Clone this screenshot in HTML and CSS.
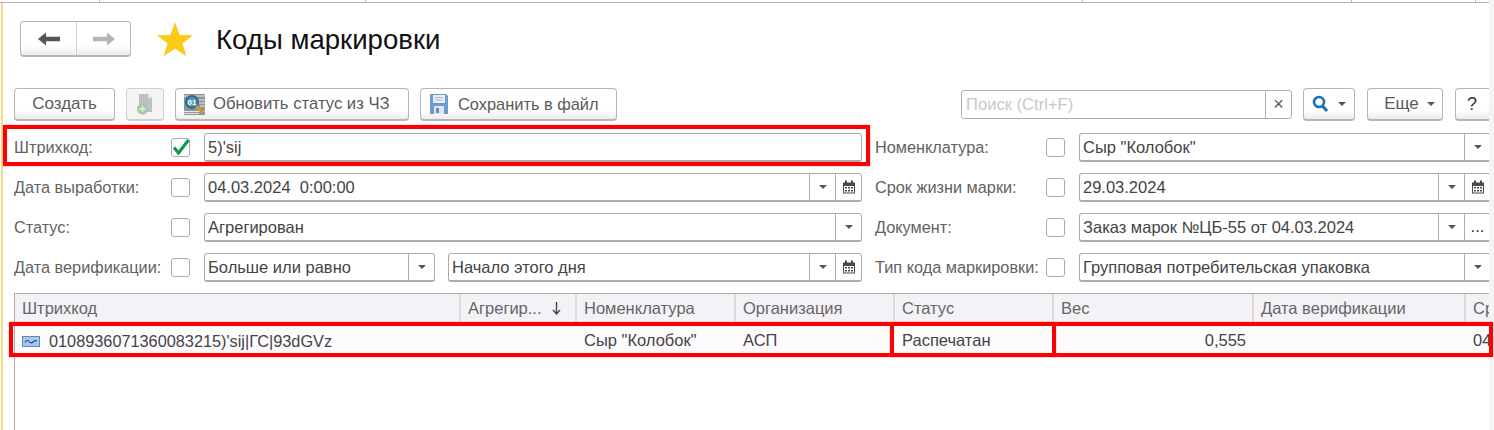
FILE: index.html
```html
<!DOCTYPE html>
<html lang="ru">
<head>
<meta charset="utf-8">
<title>Коды маркировки</title>
<link rel="stylesheet" href="styles.css">
</head>
<body>
<div class="shell">
<div class="tabs"><i class="t1"></i><i class="t2"></i><i class="t3"></i><i class="t4"></i><i class="t5"></i></div>
<main class="page">
  <header class="head">
    <div class="nav">
      <span class="nav-btn"><svg width="22" height="14" viewBox="0 0 22 14"><path d="M0 7 8 .5v4.200h14v4.600H8v4.200z" fill="#555"/></svg></span>
      <span class="nav-btn"><svg width="22" height="14" viewBox="0 0 22 14"><path d="M22 7 14 .5v4.200H0v4.600h14v4.200z" fill="#b4b4b4"/></svg></span>
    </div>
    <svg class="star" width="36" height="33" viewBox="0 0 36 34"><path d="M18 0 22.500 12.500 36 12.800 25.300 20.800 29.200 33.600 18 26 6.800 33.600 10.700 20.800 0 12.800 13.500 12.500z" fill="#fdcb13" stroke="#eeb911" stroke-width=".5"/></svg>
    <h1 class="title">Коды маркировки</h1>
  </header>

  <div class="toolbar">
    <button class="btn b-create">Создать</button>
    <button class="btn b-copy"><svg width="18" height="24" viewBox="0 0 18 24"><path d="M3 2h9l4 4v14H3z" fill="#bcc0c3"/><path d="M12 2v4h4z" fill="#e3e5e7"/><circle cx="6.500" cy="17" r="5.500" fill="#a5c9a8"/><path d="M6.500 14v6M3.500 17h6" stroke="#e8f2e8" stroke-width="1.400"/></svg></button>
    <button class="btn b-update"><svg width="21" height="21" viewBox="0 0 21 21"><rect width="21" height="21" fill="#8f9498"/><path d="M0 2h21M14 6h7M15 9h6M0 17.500h21M16 12h5M0 19.500h15" stroke="#e6e6e6" stroke-width="1"/><circle cx="8" cy="8" r="7" fill="#1f6c90"/><circle cx="8" cy="8" r="5" fill="#5b93ad"/><text x="3.500" y="11" class="qr">01</text><path d="M12 12l7 7" stroke="#d9951e" stroke-width="3"/></svg><span>Обновить статус из ЧЗ</span></button>
    <button class="btn b-save"><svg width="18" height="20" viewBox="0 0 18 20"><path d="M0 0h16l2 2v18H0z" fill="#6c9bd2"/><rect x="3" y="1" width="12" height="8" fill="#e9eff7"/><path d="M5 3.500h8M5 6h8" stroke="#9db6d4"/><rect x="4" y="12" width="10" height="8" fill="#dfe5ec"/><rect x="6" y="14" width="3" height="5" fill="#6c8fb8"/></svg><span>Сохранить в файл</span></button>
    <div class="search">
      <span class="search-input">Поиск (Ctrl+F)</span>
      <span class="search-clear">×</span>
    </div>
    <button class="btn b-find"><svg width="17" height="18" viewBox="0 0 17 18"><circle cx="7" cy="7" r="5" fill="none" stroke="#1f6fb5" stroke-width="2.600"/><path d="M10.500 11l4.500 5" stroke="#1f6fb5" stroke-width="3.200"/></svg><i class="arrow"></i></button>
    <button class="btn b-more"><span>Еще</span><i class="arrow"></i></button>
    <button class="btn b-help">?</button>
  </div>

  <section class="form">
    <div class="row">
      <label class="label">Штрихкод:</label>
      <span class="check"><svg width="19" height="19" viewBox="0 0 19 19"><path d="M3 9.500 7.500 15 17.500 2" fill="none" stroke="#0d9a4a" stroke-width="3.200"/></svg></span>
      <div class="field"><span class="value">5)'sij</span></div>
    </div>
    <div class="row">
      <label class="label">Номенклатура:</label>
      <span class="check"></span>
      <div class="field"><span class="value">Сыр "Колобок"</span><span class="fb"><i class="arrow"></i></span></div>
    </div>
    <div class="row">
      <label class="label">Дата выработки:</label>
      <span class="check"></span>
      <div class="field"><span class="value">04.03.2024&nbsp; 0:00:00</span><span class="fb"><i class="arrow"></i></span><span class="fb"><svg class="cal" width="14" height="14" viewBox="0 0 14 14"><use href="#cal"/></svg></span></div>
    </div>
    <div class="row">
      <label class="label">Срок жизни марки:</label>
      <span class="check"></span>
      <div class="field"><span class="value">29.03.2024</span><span class="fb"><i class="arrow"></i></span><span class="fb"><svg class="cal" width="14" height="14" viewBox="0 0 14 14"><use href="#cal"/></svg></span></div>
    </div>
    <div class="row">
      <label class="label">Статус:</label>
      <span class="check"></span>
      <div class="field"><span class="value">Агрегирован</span><span class="fb"><i class="arrow"></i></span></div>
    </div>
    <div class="row">
      <label class="label">Документ:</label>
      <span class="check"></span>
      <div class="field"><span class="value">Заказ марок №ЦБ-55 от 04.03.2024</span><span class="fb"><i class="arrow"></i></span><span class="fb dots">...</span></div>
    </div>
    <div class="row">
      <label class="label">Дата верификации:</label>
      <span class="check"></span>
      <div class="field f-cond"><span class="value">Больше или равно</span><span class="fb"><i class="arrow"></i></span></div>
      <div class="field f-period"><span class="value">Начало этого дня</span><span class="fb"><i class="arrow"></i></span><span class="fb"><svg class="cal" width="14" height="14" viewBox="0 0 14 14"><use href="#cal"/></svg></span></div>
    </div>
    <div class="row">
      <label class="label">Тип кода маркировки:</label>
      <span class="check"></span>
      <div class="field"><span class="value">Групповая потребительская упаковка</span><span class="fb"><i class="arrow"></i></span></div>
    </div>
  </section>

  <section class="table">
    <div class="thead">
      <span class="th">Штрихкод</span>
      <span class="th th-sort">Агрегир...<svg width="9" height="13" viewBox="0 0 9 13"><path d="M4.500 0v11M1 8l3.500 4L8 8" fill="none" stroke="#444" stroke-width="1.400"/></svg></span>
      <span class="th">Номенклатура</span>
      <span class="th">Организация</span>
      <span class="th">Статус</span>
      <span class="th">Вес</span>
      <span class="th">Дата верификации</span>
      <span class="th">Срок</span>
    </div>
    <div class="tbody">
      <span class="td td-code"><svg width="18" height="11" viewBox="0 0 18 11"><rect x=".5" y=".5" width="17" height="10" fill="#a9c6e6" stroke="#5d8bbd"/><path d="M3 6.500q2-3.500 4-1t4 .5 4-1" fill="none" stroke="#1c4f8c" stroke-width="1.100"/></svg>0108936071360083215)'sij|ГС|93dGVz</span>
      <span class="td"></span>
      <span class="td">Сыр "Колобок"</span>
      <span class="td">АСП</span>
      <span class="td">Распечатан</span>
      <span class="td td-num">0,555</span>
      <span class="td"></span>
      <span class="td">04.03.2024</span>
    </div>
  </section>
</main>
</div>

<div class="mark m1"></div>
<div class="mark m2"></div>
<div class="mark m3"></div>

<svg class="defs" width="0" height="0"><defs><symbol id="cal" viewBox="0 0 14 14"><path d="M1 2.500h12v11H1z" fill="#4a4a4a"/><rect x="2" y="6" width="10" height="6.500" fill="#fff"/><path d="M3 .5h2v3H3zM9 .5h2v3H9z" fill="#4a4a4a"/><path d="M3 7h2v1.500H3zM6 7h2v1.500H6zM9 7h2v1.500H9zM3 10h2v1.500H3zM6 10h2v1.500H6zM9 10h2v1.500H9z" fill="#4a4a4a"/></symbol></defs></svg>
</body>
</html>
```
FILE: styles.css
```css
* { box-sizing: border-box; }
html, body { margin: 0; height: 430px; overflow: hidden; background: #f4f4f4; }
body { font-family: "Liberation Sans", Arial, sans-serif; font-size: 16.5px; color: #444; position: relative; }
.defs { position: absolute; }
.shell { width: 1489px; height: 430px; background: #fff; overflow: hidden; }

.tabs { height: 3px; border-bottom: 1px solid #b9b3b9; display: flex; }
.tabs i { display: block; height: 2px; border-right: 1px solid #b9b3b9; }
.t1 { width: 100px; } .t2 { width: 266px; } .t3 { width: 717px; } .t4 { width: 269px; } .t5 { width: 124px; }

.page { height: 427px; width: 1488px; overflow: hidden; margin-left: 1px; border-left: 2px solid #f3dc85; padding-left: 11px; }

.head { display: flex; align-items: center; height: 85px; padding: 0 0 13px 6px; }
.nav { display: flex; width: 111px; height: 36px; border: 1px solid #b5b5b5; border-bottom-width: 2px; border-radius: 4px; background: linear-gradient(#fff 70%, #ececec); }
.nav-btn { flex: 1; display: flex; align-items: center; justify-content: center; }
.nav-btn + .nav-btn { border-left: 1px solid #d0d0d0; flex: 0 0 54px; }
.star { margin-left: 26px; }
.title { margin: 2px 0 0 23px; font-size: 27.6px; font-weight: 400; color: #111; line-height: 32px; }

.toolbar { display: flex; height: 33px; margin-bottom: 12px; gap: 11px; align-items: flex-start; }
.btn { flex: none; display: flex; align-items: center; justify-content: center; height: 33px; padding: 0; border: 1px solid #b5b5b5; border-bottom-width: 2px; border-radius: 4px; background: linear-gradient(#fff 70%, #ececec); font: inherit; font-size: 17px; color: #5a5a5a; }
.b-create { width: 101px; }
.b-copy { width: 38px; background: #f4f4f4; border-color: #d0d0d0; }
.b-update { width: 234px; gap: 8px; justify-content: flex-start; padding-left: 8px; font-size: 16.7px; }
.b-save { width: 197px; gap: 10px; justify-content: flex-start; padding-left: 9px; font-size: 16.4px; }
.qr { font-family: "Liberation Sans", Arial, sans-serif; font-size: 8px; font-weight: 700; fill: #fff; }
.search { flex: none; display: flex; width: 331px; height: 29px; margin: 2px 0 0 333px; border: 1px solid #b0b0b0; border-radius: 3px; }
.search-input { flex: 1; padding: 0 4px; line-height: 27px; color: #c8c8c8; font-size: 16.6px; }
.search-clear { width: 26px; border-left: 1px solid #b0b0b0; text-align: center; line-height: 26px; font-size: 18px; color: #555; }
.b-find { width: 52px; gap: 9px; }
.b-more { width: 76px; gap: 8px; margin-left: 1px; padding-left: 9px; }
.b-help { width: 42px; margin-left: 1px; color: #333; padding-right: 8px; font-size: 18px; }
.arrow { display: inline-block; width: 0; height: 0; border-left: 4px solid transparent; border-right: 4px solid transparent; border-top: 4px solid #555; }

.form { display: grid; grid-template-columns: 848px 616px; column-gap: 13px; row-gap: 11px; width: 1477px; }
.row { display: flex; align-items: center; height: 29px; }
.label { flex: 0 0 157px; font-size: 16.3px; color: #626262; white-space: nowrap; }
.row:nth-child(even) .label { flex-basis: 171px; }
.check { flex: 0 0 19px; width: 19px; height: 19px; margin-right: 14px; border: 1px solid #adadad; border-radius: 3px; background: #fff; }
.check svg { display: block; margin: -1px; }
.field { flex: 1; display: flex; height: 29px; border: 1px solid #adadad; border-bottom-width: 2px; border-radius: 3px; overflow: hidden; }
.value { flex: 1; padding: 0 3px; line-height: 26px; font-size: 16.5px; color: #444; white-space: nowrap; }
.fb { flex: 0 0 26px; display: flex; align-items: center; justify-content: center; border-left: 1px solid #adadad; }
.dots { color: #333; align-items: flex-end; padding-bottom: 4px; }
.f-cond { flex: 0 0 231px; margin-right: 13px; }

.table { margin-top: 11px; border-top: 1px solid #adadad; border-left: 1px solid #adadad; height: 137px; width: 1477px; }
.thead, .tbody { display: grid; grid-template-columns: 446px 116px 159px 159px 159px 200px 212px 40px; }
.thead { height: 28px; background: #f4f2f6; }
.tbody { height: 32px; background: #fdfbfe; margin-top: 3px; }
.th { padding: 0 7px; line-height: 28px; font-size: 16.5px; color: #666; border-right: 2px solid #dcdcdc; white-space: nowrap; overflow: hidden; }
.th-sort { display: flex; align-items: center; justify-content: space-between; padding-right: 14px; }
.td { padding: 0 7px; line-height: 30px; font-size: 16.5px; color: #444; white-space: nowrap; overflow: hidden; }
.td-code { display: flex; align-items: center; gap: 9px; font-size: 16.3px; }
.td-num { text-align: right; padding-right: 8px; }

.mark { position: absolute; border: 4px solid #fe0000; box-shadow: 0 0 1px #f66; pointer-events: none; }
.m1 { left: 3px; top: 125px; width: 867px; height: 41px; }
.m2 { left: 9px; top: 322px; width: 1484px; height: 35px; }
.m3 { left: 890px; top: 322px; width: 166px; height: 35px; }
```
